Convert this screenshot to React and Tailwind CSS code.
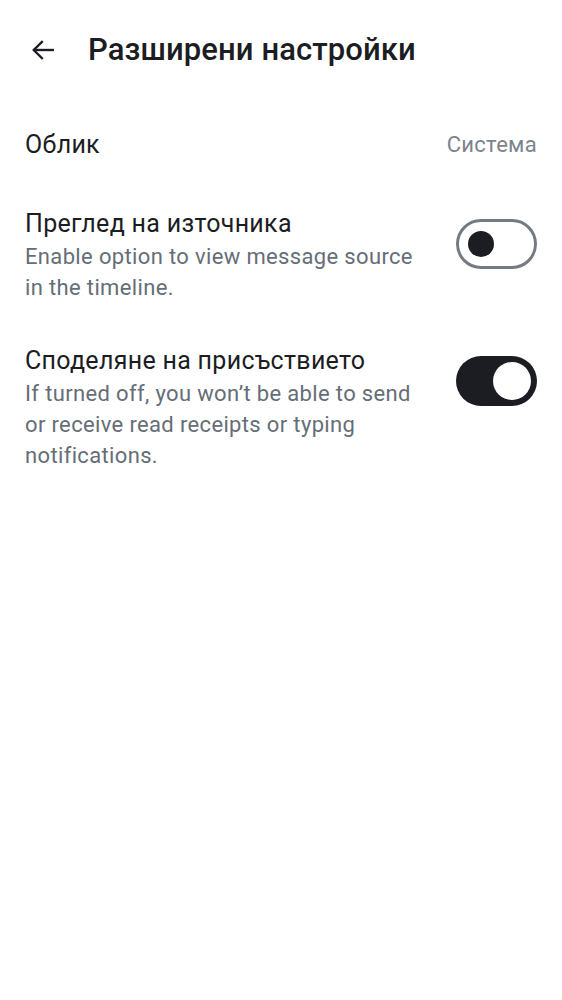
export default function App() {
  return (
    <main className="min-h-screen w-[562px] bg-white text-[#1b1d22]" style={{ fontFamily: "Roboto, 'Noto Sans', sans-serif" }}>
      {/* Top bar */}
      <header className="flex items-center h-[100px] pl-[30px]">
        <svg width="26" height="26" viewBox="0 0 24 24" fill="none" stroke="#1b1d22" strokeWidth="2.2" strokeLinecap="square">
          <path d="M21 12H4" />
          <path d="M11 4.5L3.5 12L11 19.5" />
        </svg>
        <h1 className="ml-[32px] text-[31px] font-medium tracking-[0.1px]">Разширени настройки</h1>
      </header>

      <section className="px-[25px]">
        {/* Облик */}
        <div className="flex items-center justify-between h-[86px] pt-[3px]">
          <span className="text-[25px] tracking-[0.3px]">Облик</span>
          <span className="text-[22px] tracking-[0.3px] text-[#7d838b]">Система</span>
        </div>

        {/* Преглед на източника */}
        <div className="flex items-start justify-between pt-[20px]">
          <div className="w-[400px]">
            <div className="text-[25px] leading-[35px] tracking-[0.3px]">Преглед на източника</div>
            <p className="text-[22px] leading-[31px] tracking-[0.35px] text-[#656d77]">Enable option to view message source in the timeline.</p>
          </div>
          <div className="w-[81px] h-[50px] rounded-full border-[3px] border-[#737a84] flex items-center pl-[9px] mt-[13px]">
            <div className="w-[26px] h-[26px] rounded-full bg-[#1b1d22]" />
          </div>
        </div>

        {/* Споделяне на присъствието */}
        <div className="flex items-start justify-between pt-[40px]">
          <div className="w-[400px]">
            <div className="text-[25px] leading-[35px] tracking-[0.3px]">Споделяне на присъствието</div>
            <p className="text-[22px] leading-[31px] tracking-[0.35px] text-[#656d77]">If turned off, you won’t be able to send or receive read receipts or typing notifications.</p>
          </div>
          <div className="w-[81px] h-[50px] rounded-full bg-[#1b1d22] flex items-center justify-end pr-[6px] mt-[13px]">
            <div className="w-[38px] h-[38px] rounded-full bg-white" />
          </div>
        </div>
      </section>
    </main>
  );
}
